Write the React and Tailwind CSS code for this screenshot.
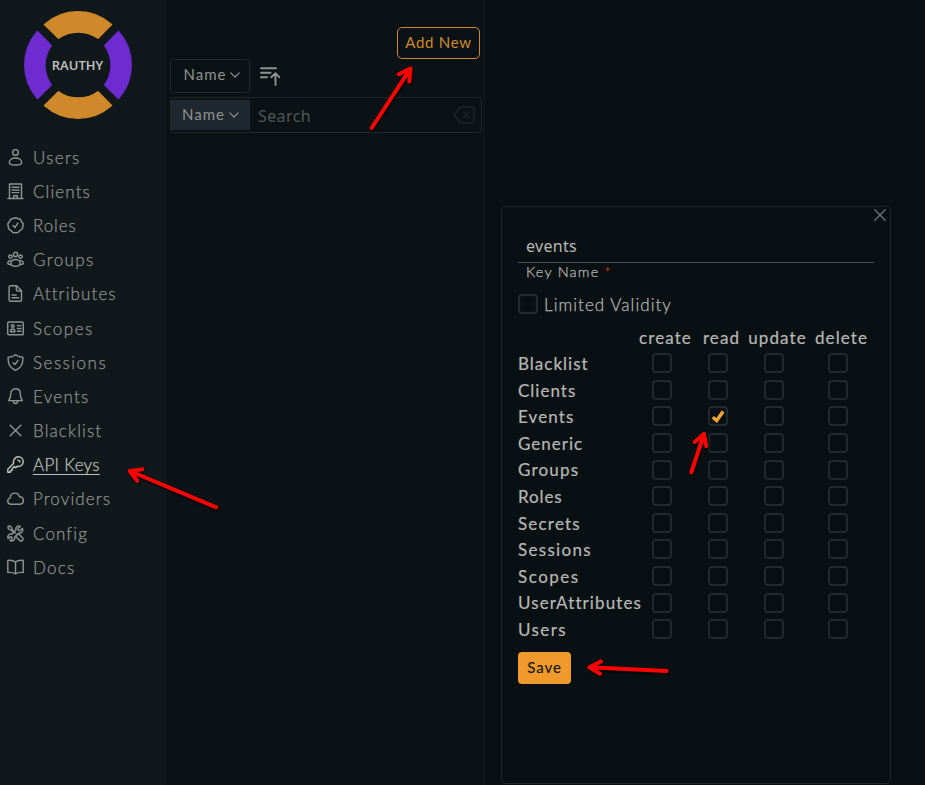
import React from 'react';

const PATHS = {
  user: (
    <>
      <circle cx="8.5" cy="3.4" r="2.8" />
      <path d="M8.5 9c3.600 0 6.200 1.900 6.200 4.400 0 1.600-2.500 2.600-6.200 2.600s-6.200-1-6.200-2.600c0-2.500 2.600-4.400 6.200-4.400Z" />
    </>
  ),
  building: (
    <>
      <path d="M2.500 15.500V1h12v14.500M1 15.500h15M6.700 15.500v-2.800h3.600v2.800" />
      <path d="M5.100 4.200h1.600M7.700 4.200h1.600M10.300 4.200h1.600M5.100 6.900h1.600M7.700 6.900h1.600M10.300 6.900h1.600M5.100 9.600h1.600M7.700 9.600h1.600M10.300 9.600h1.600" />
    </>
  ),
  badge: (
    <>
      <path d="M8.500.8 10.700 1.500 13.300 2.300 14.600 4.700 16.200 6.800 15.800 9.300 15.200 12 12.900 13.600 11 15.500 8.500 15.700 5.900 15.500 4 13.600 1.800 12 1.200 9.300.8 6.800 2.400 4.700 3.700 2.300 6.300 1.500Z" />
      <path d="m6 8.500 1.900 1.900 3-4.300" />
    </>
  ),
  groups: (
    <>
      <circle cx="8.500" cy="3.400" r="2.100" />
      <circle cx="3.400" cy="5.600" r="1.700" />
      <circle cx="13.600" cy="5.600" r="1.700" />
      <path d="M8.500 8.400c2.700 0 4.600 1.700 4.600 3.800 0 2-1.200 3-4.600 3s-4.600-1-4.600-3c0-2.100 1.900-3.800 4.600-3.800Z" />
      <path d="M3.600 9.700C1.900 9.600.8 10.700.8 12c0 1 .8 1.500 2.700 1.600M13.400 9.700c1.700-.1 2.800 1 2.800 2.300 0 1-.8 1.500-2.700 1.600" />
    </>
  ),
  document: (
    <path d="M3.600.8h6l4.900 5v8.900c0 .9-.6 1.500-1.500 1.500H3.600c-.9 0-1.500-.6-1.500-1.500V2.300c0-.9.600-1.500 1.500-1.500ZM9.300 1v3.500c0 .9.600 1.500 1.500 1.500h3.500M5 10h4.200M5 12.700h6.700" />
  ),
  idcard: (
    <>
      <rect x=".7" y="2" width="15.600" height="12.800" rx="1.300" />
      <circle cx="5.700" cy="5.900" r="1.300" />
      <path d="M3.500 11.700c0-1.800.9-2.700 2.200-2.700s2.200.9 2.200 2.700Z" />
      <path d="M10.400 5.600h3.600M10.400 8.400h3.600M10.400 11.200h3.600" />
    </>
  ),
  shield: (
    <>
      <path d="M8.500.8c2 1.600 4.300 2.400 7.300 2.500.5 6-1.700 10.800-7.300 12.900C2.900 14.100.7 9.300 1.200 3.300c3-.1 5.300-.9 7.300-2.500Z" />
      <path d="m6 8.700 1.900 1.900 3.100-4.300" />
    </>
  ),
  bell: (
    <>
      <path d="M8.500.8c2.900 0 4.700 2 4.700 4.700 0 3.500.8 5.300 2.200 7.100H1.600C3 10.800 3.800 9 3.800 5.500 3.800 2.800 5.600.8 8.500.8Z" />
      <path d="M6.300 12.800c0 1.700.8 2.700 2.200 2.700s2.200-1 2.200-2.700" />
    </>
  ),
  cross: <path d="m3.200 3.200 10.600 10.600M13.800 3.200 3.200 13.800" />,
  key: (
    <>
      <path d="M7.300 10.600 5 13v1.600H3.400v1.600H.8v-3l5.700-5.700C5.900 3.800 8.300.8 11.300.8c2.800 0 4.900 2.100 4.900 4.900 0 3.200-2.800 5.400-6 4.600L8.700 11.600Z" />
      <path d="M10.800 4.100c1.200 0 2 .8 2 2" />
    </>
  ),
  cloud: <path d="M4 14.300c-2 0-3.300-1.300-3.300-3.200 0-1.700 1-2.800 2.500-3.200.1-3 2-4.800 4.600-4.800 2.500 0 4.100 1.400 4.600 3.600 2.300.1 3.900 1.700 3.900 3.900 0 2.300-1.500 3.700-3.600 3.700Z" />,
  tools: (
    <>
      <path d="M1.200 1.200h2.300l1.700 2.500v1.200l3 2.900M1.200 1.200v2.300l2.500 1.700h1.200l2.700 2.900M10.200 9.200l1.500-.3 4.100 4.100c.8 1.800-1 3.600-2.800 2.800L9 11.800l.2-1.500" />
      <path d="M15.300 3.300 13 5.500l-1.700-.3L11 3.600l2.300-2.300C10.900.1 8.400 1.900 9 4.800L4.700 9.200C2 8.500.1 11 1.200 13.600l2-1.900 1.700.4.300 1.500-2 2c2.500 1.300 5.100-.7 4.400-3.400L12 7.900c2.700.5 4.500-2.100 3.300-4.600Z" />
    </>
  ),
  book: <path d="M8.500 3C6.700 1.400 4 1.100.8 1.400v12.100c3.200-.3 5.900 0 7.700 1.300M8.500 3c1.800-1.600 4.500-1.900 7.700-1.600v12.100c-3.200-.3-5.900 0-7.700 1.300ZM8.500 3v11.500" />,
};

function NavIcon({ name }) {
  return (
    <svg viewBox="0 0 17 17" className="size-[17px] shrink-0" fill="none" stroke="currentColor" strokeWidth="1.450" strokeLinecap="round" strokeLinejoin="round">
      {PATHS[name]}
    </svg>
  );
}

const NAV = [
  ['Users', 'user', 'tracking-[1.3px]'],
  ['Clients', 'building', 'tracking-[1.1px]'],
  ['Roles', 'badge', 'tracking-[0.9px]'],
  ['Groups', 'groups', 'tracking-[1.4px]'],
  ['Attributes', 'document', 'tracking-[1.1px]'],
  ['Scopes', 'idcard', 'tracking-[1.5px]'],
  ['Sessions', 'shield', 'tracking-[1.5px]'],
  ['Events', 'bell', 'tracking-[1.3px]'],
  ['Blacklist', 'cross', 'tracking-[1.1px]'],
  ['API Keys', 'key', 'tracking-[0.3px]'],
  ['Providers', 'cloud', 'tracking-[1.1px]'],
  ['Config', 'tools', 'tracking-[1.1px]'],
  ['Docs', 'book', 'tracking-[1.200px]'],
];

const RIGHTS = [
  ['Blacklist', 'tracking-[1px]'],
  ['Clients', 'tracking-[1px]'],
  ['Events', 'tracking-[1.100px]'],
  ['Generic', 'tracking-[1px]'],
  ['Groups', 'tracking-[1.200px]'],
  ['Roles', 'tracking-[0.900px]'],
  ['Secrets', 'tracking-[1.200px]'],
  ['Sessions', 'tracking-[1.300px]'],
  ['Scopes', 'tracking-[1.500px]'],
  ['UserAttributes', 'tracking-[1.100px]'],
  ['Users', 'tracking-[1.400px]'],
];

const ACTIONS = ['create', 'read', 'update', 'delete'];

function Logo() {
  return (
    <svg viewBox="0 0 108 108" className="size-[108px]" strokeWidth="1.500" strokeLinejoin="round">
      <g fill="#cf892b" stroke="#cf892b">
        <path d="M20.500 13.500A50.500 50.500 0 0 1 87.500 13.500L74 27.200A34 34 0 0 0 34.500 27.200Z" />
        <path d="M20.500 94.500A50.500 50.500 0 0 0 87.500 94.500L74 80.800A34 34 0 0 1 34.500 80.800Z" />
      </g>
      <g fill="#6d2bd0" stroke="#6d2bd0">
        <path d="M13.500 20.500A50.500 50.500 0 0 0 13.500 87.500L27.200 74A34 34 0 0 1 27.200 34.500Z" />
        <path d="M94.500 20.500A50.500 50.500 0 0 1 94.500 87.500L80.800 74A34 34 0 0 0 80.800 34.500Z" />
      </g>
      <text x="53.500" y="58.700" textAnchor="middle" textLength="51.500" fill="#c4c6c3" stroke="none" className="font-['Open_Sans',sans-serif] text-[13px] font-semibold">RAUTHY</text>
    </svg>
  );
}

function Chevron() {
  return (
    <svg viewBox="0 0 10 6" className="h-[6px] w-[10px]" fill="none" stroke="currentColor" strokeWidth="1.200" strokeLinecap="round" strokeLinejoin="round">
      <path d="m.8.8 4.200 4.200L9.200.8" />
    </svg>
  );
}

function Checkbox({ checked }) {
  return (
    <span className="flex size-5 shrink-0 items-center justify-center rounded border-2 border-[#20292e]">
      {checked && (
        <svg viewBox="0 0 16 16" className="size-4 shrink-0" fill="none" stroke="#fda72c" strokeWidth="3.400">
          <path d="m2.800 9.300 3.900 3.200L13.100 3.400" />
        </svg>
      )}
    </span>
  );
}

function Arrows() {
  return (
    <svg viewBox="0 0 925 785" className="pointer-events-none absolute inset-0 h-[785px] w-[925px] drop-shadow-[1px_2px_1px_rgba(0,0,0,0.7)]" fill="none" stroke="#fe0000" strokeWidth="4" strokeLinecap="round" strokeLinejoin="round">
      <path d="M371.700 128 410.500 68.500M398.700 74.200l11.800-5.700-1.200 13" />
      <path d="M216.300 507.300 129.800 471M142.300 469.300 129.800 471l7.400 9.800" />
      <path d="M691.300 472.300 704 434M694.600 442l9.400-8 2.200 12.200" />
      <path d="M666.700 671 589.500 667.300M601 661.500l-11.500 5.800 10.500 6.400" />
    </svg>
  );
}

export default function App() {
  return (
    <div className="relative flex h-[785px] w-[925px] overflow-hidden bg-[#091013] font-['Lato',sans-serif] text-[#8f9290]">
      <nav className="flex w-[166px] shrink-0 flex-col bg-[#10181b] pt-[11px]">
        <div className="pl-6">
          <Logo />
        </div>
        <ul className="mt-[21px]">
          {NAV.map(([label, icon, tracking]) => {
            const active = label === 'API Keys';
            return (
              <li key={label} className={`flex h-[34.200px] items-center gap-[9px] pl-[7px] text-[17px] font-light leading-5 ${active ? 'text-[#bfc1bd]' : 'text-[#8f9290]'}`}>
                <NavIcon name={icon} />
                <span className={`whitespace-nowrap pt-px [-webkit-text-stroke:0.250px_currentColor] ${tracking} ${active ? 'underline decoration-1 underline-offset-[3px]' : ''}`}>{label}</span>
              </li>
            );
          })}
        </ul>
      </nav>

      <section className="flex w-[319px] shrink-0 flex-col border-r border-[#10181b] bg-[#0b1215] pl-1 pt-[27px]">
        <button className="mr-1 flex h-8 w-[83px] items-center justify-center self-end whitespace-nowrap rounded-[5px] border border-[#cf892b] pb-[2px] text-[15px] tracking-[0.700px] text-[#cf892b]">Add New</button>
        <div className="flex items-center gap-[10px]">
          <button className="flex h-[34px] w-[80px] items-center justify-center gap-1 rounded border border-[#1f282d] pb-[3px] pl-1 text-[15px] tracking-[1px]">
            Name
            <Chevron />
          </button>
          <svg viewBox="0 0 20 20" className="mt-[2px] size-5" fill="none" stroke="currentColor" strokeWidth="1.900" strokeLinecap="round" strokeLinejoin="round">
            <path d="M1 1.300h15M1 5.800h9.500M1 10.300h6M15.500 18V6.500M11.300 10.300 15.500 6.200l4 4.100" />
          </svg>
        </div>
        <div className="mr-[2px] mt-1 flex h-9 items-center rounded border border-[#1f282d] pr-[6px]">
          <button className="-ml-px flex h-[30px] w-[80px] shrink-0 items-center justify-center gap-1 bg-[#1f272f] pb-px pl-px text-[15px] tracking-[1px]">
            Name
            <Chevron />
          </button>
          <span className="ml-2 flex-1 pt-[2px] font-['Noto_Sans',sans-serif] text-base tracking-[0.400px] text-[#50575a]">Search</span>
          <svg viewBox="0 0 22 18" className="h-[18px] w-[22px]" fill="none" stroke="#1d262b" strokeWidth="1.500" strokeLinejoin="round" strokeLinecap="round">
            <path d="M7.500 1h11.800c1 0 1.700.7 1.700 1.700v12.600c0 1-.7 1.700-1.700 1.700H7.500L1 9Z" />
            <path d="m10.500 6.300 5.400 5.400M15.900 6.300l-5.400 5.400" />
          </svg>
        </div>
      </section>

      <main className="flex-1 pl-4 pt-[206px]">
        <div className="h-[578px] w-[390px] rounded-[5px] border border-[#20282c] pl-4 text-[#b7b8b4]">
          <div className="flex h-[18px] justify-end pr-1 pt-[2px]">
            <svg viewBox="0 0 12 12" className="size-3" fill="none" stroke="#6b7072" strokeWidth="1.400" strokeLinecap="round">
              <path d="m.8.8 10.400 10.400M11.200.8.8 11.200" />
            </svg>
          </div>
          <div className="flex h-[38px] w-[356px] items-end border-b border-[#4e5354] px-2 pb-1 font-['Noto_Sans',sans-serif] text-base leading-6 tracking-[0.300px]">events</div>
          <div className="flex h-[18px] items-center gap-[5px] pl-2 text-[14.500px] leading-[18px]">
            <span className="font-light tracking-[1.200px] [-webkit-text-stroke:0.250px_currentColor]">Key Name</span>
            <span className="text-[14px] text-[#b23010]">*</span>
          </div>
          <label className="mt-[13px] flex h-5 items-center gap-[6px] text-[17px]">
            <Checkbox />
            <span className="pt-[2px] font-light tracking-[1.050px] [-webkit-text-stroke:0.250px_currentColor]">Limited Validity</span>
          </label>
          <div className="mt-[11px] grid w-[360px] grid-cols-[119.500px_56px_56px_56px_72px] text-[17px] [-webkit-text-stroke:0.200px_currentColor]">
            <span />
            {ACTIONS.map((action) => (
              <span key={action} className="flex h-[25px] items-center justify-self-center whitespace-nowrap tracking-[1.100px]">{action}</span>
            ))}
            {RIGHTS.map(([label, tracking]) => (
              <React.Fragment key={label}>
                <span className={`flex h-[26.600px] items-center whitespace-nowrap pt-px ${tracking}`}>{label}</span>
                {ACTIONS.map((action) => (
                  <span key={action} className="flex h-[26.600px] items-center justify-center pr-[7px]">
                    <Checkbox checked={label === 'Events' && action === 'read'} />
                  </span>
                ))}
              </React.Fragment>
            ))}
          </div>
          <button className="mt-[9px] flex h-8 w-[53px] items-center justify-center rounded bg-[#f09a2c] text-[15px] font-medium tracking-[0.900px] text-[#10181b]">Save</button>
        </div>
      </main>
      <Arrows />
    </div>
  );
}
